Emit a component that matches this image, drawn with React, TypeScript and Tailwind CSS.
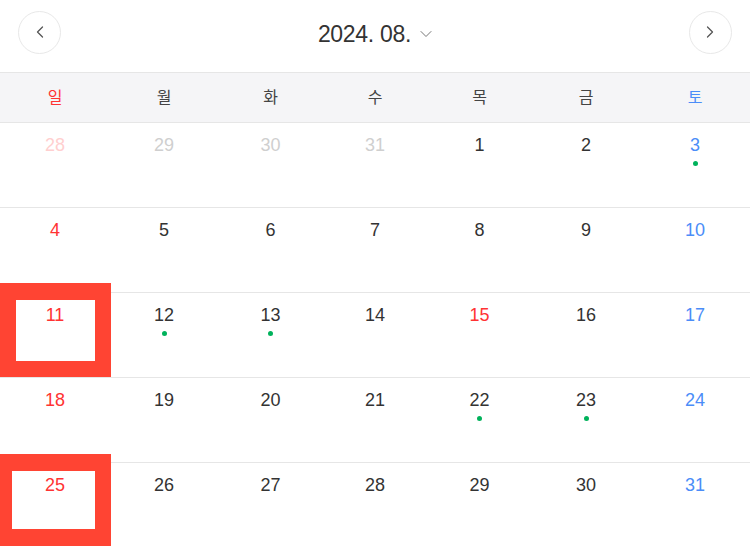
import { ChevronLeft, ChevronRight, ChevronDown } from 'lucide-react'

type Day = { n: number; muted?: boolean; holiday?: boolean; dot?: boolean }

const WEEKDAYS = ['일', '월', '화', '수', '목', '금', '토']

const DAYS: Day[] = [
  { n: 28, muted: true },
  { n: 29, muted: true },
  { n: 30, muted: true },
  { n: 31, muted: true },
  { n: 1 },
  { n: 2 },
  { n: 3, dot: true },
  ...Array.from({ length: 28 }, (_, i) => {
    const n = i + 4
    return {
      n,
      holiday: n === 15,
      dot: [12, 13, 22, 23].includes(n),
    }
  }),
]

function dayColor(d: Day, col: number) {
  if (d.muted) return col === 0 ? 'text-[#ffcfcf]' : 'text-[#cfcfcf]'
  if (col === 0 || d.holiday) return 'text-[#ff3333]'
  if (col === 6) return 'text-[#4b8df8]'
  return 'text-[#333333]'
}

// columns are a touch wider at the edges
const COLS = 'grid-cols-[110px_108px_105px_104px_105px_108px_110px]'

export default function App() {
  const weeks: Day[][] = []
  for (let i = 0; i < DAYS.length; i += 7) weeks.push(DAYS.slice(i, i + 7))

  return (
    <div
      className="relative h-[546px] w-[750px] overflow-hidden bg-white"
      style={{ fontFamily: "'Liberation Sans', 'Noto Sans CJK KR', sans-serif" }}
    >
      {/* Header */}
      <div className="flex h-[73px] items-center justify-between border-b border-[#e6e6e6] px-[18px] pb-[8px]">
        <button className="flex h-[43px] w-[43px] items-center justify-center rounded-full border border-[#e8e8e8] text-[#555]">
          <ChevronLeft size={20} strokeWidth={1.5} />
        </button>
        <div className="mt-[4px] flex items-center gap-[5px] pl-[4px] text-[#333]">
          <span className="text-[23px] tracking-[-0.3px]">2024. 08.</span>
          <ChevronDown size={20} strokeWidth={1.2} className="text-[#777]" />
        </div>
        <button className="flex h-[43px] w-[43px] items-center justify-center rounded-full border border-[#e8e8e8] text-[#555]">
          <ChevronRight size={20} strokeWidth={1.5} />
        </button>
      </div>

      {/* Weekdays */}
      <div className={`grid h-[50px] items-center border-b border-[#e6e6e6] bg-[#f5f5f7] ${COLS}`}>
        {WEEKDAYS.map((w, i) => (
          <div
            key={w}
            className={`text-center text-[16px] ${
              i === 0 ? 'text-[#ff3333]' : i === 6 ? 'text-[#4b8df8]' : 'text-[#444]'
            }`}
          >
            {w}
          </div>
        ))}
      </div>

      {/* Weeks */}
      {weeks.map((week, wi) => (
        <div key={wi} className={`grid h-[85px] border-b border-[#e6e6e6] ${COLS}`}>
          {week.map((d, ci) => (
            <div key={ci} className="flex flex-col items-center pt-[10px]">
              <span className={`text-[18px] leading-[24px] ${dayColor(d, ci)}`}>{d.n}</span>
              {d.dot && <span className="mt-[4px] h-[5px] w-[5px] rounded-full bg-[#00b25b]" />}
            </div>
          ))}
        </div>
      ))}

      {/* Highlight overlays */}
      <div className="absolute left-0 top-[283px] h-[94px] w-[111px] border-[16px] border-t-[17px] border-[#ff4433]" />
      <div className="absolute left-0 top-[454px] h-[92px] w-[111px] border-[16px] border-y-[17px] border-l-[12px] border-[#ff4433]" />
    </div>
  )
}
